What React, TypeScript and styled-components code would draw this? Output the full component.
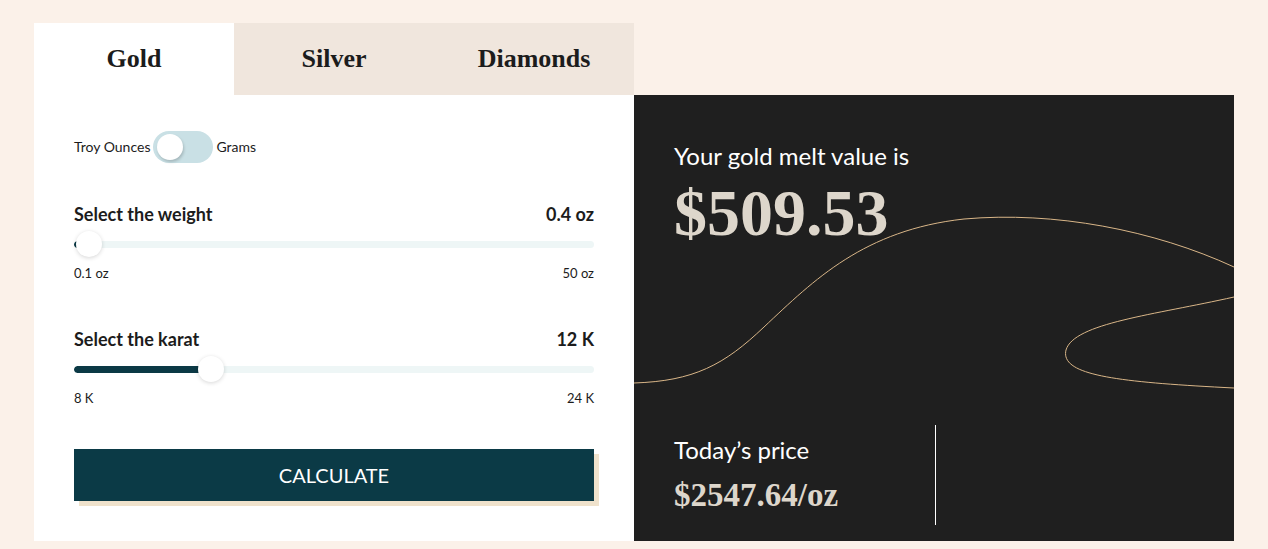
import React from "react";
import styled, { createGlobalStyle } from "styled-components";

const GlobalStyle = createGlobalStyle`
  body {
    margin: 0;
    background: #fbf1e9;
    font-family: Lato, "Open Sans", sans-serif;
    color: #1c1c1c;
  }
`;

const Page = styled.div`
  display: flex;
  justify-content: center;
  padding: 23px 0 8px;
`;

const Calculator = styled.div`
  width: 1200px;
  display: grid;
  grid-template-columns: 600px 600px;
  grid-template-rows: 72px 446px;
`;

const Tabs = styled.div`
  grid-column: 1;
  grid-row: 1;
  display: flex;
  background: #f0e6dd;
`;

const Tab = styled.button<{ active?: boolean }>`
  flex: 1;
  border: 0;
  padding: 0;
  display: flex;
  align-items: center;
  justify-content: center;
  background: ${({ active }) => (active ? "#ffffff" : "transparent")};
  font-family: "Liberation Serif", "DejaVu Serif", serif;
  font-weight: 700;
  font-size: 26px;
  color: #1c1c1c;
  cursor: pointer;
`;

const FormPanel = styled.div`
  grid-column: 1;
  grid-row: 2;
  background: #ffffff;
  padding: 36px 40px 0;
  display: flex;
  flex-direction: column;
`;

const ToggleRow = styled.div`
  display: flex;
  align-items: center;
  gap: 3px;
  height: 32px;
  line-height: 30px;
  font-size: 14px;
`;

const Switch = styled.div`
  width: 60px;
  height: 32px;
  border-radius: 16px;
  background: #c9e0e5;
  display: flex;
  align-items: center;
  padding: 0 4px;
  box-sizing: border-box;
`;

const Knob = styled.div`
  width: 26px;
  height: 26px;
  border-radius: 50%;
  background: #ffffff;
  box-shadow: 1px 2px 3px rgba(0, 0, 0, 0.18);
`;

const Field = styled.div<{ gap: number }>`
  margin-top: ${({ gap }) => gap}px;
  display: flex;
  flex-direction: column;
`;

const FieldHeader = styled.div`
  display: flex;
  justify-content: space-between;
  height: 20px;
  line-height: 20px;
  font-size: 18px;
  font-weight: 700;
`;

const Track = styled.div`
  position: relative;
  margin-top: 7px;
  height: 26px;
  display: flex;
  align-items: center;
`;

const Rail = styled.div`
  width: 100%;
  height: 7px;
  border-radius: 4px;
  background: #eef6f6;
  overflow: hidden;
`;

const Fill = styled.div`
  height: 100%;
  background: #0b3945;
  border-radius: 4px;
`;

const Thumb = styled.div`
  position: absolute;
  top: 0;
  width: 26px;
  height: 26px;
  border-radius: 50%;
  background: #ffffff;
  box-shadow: 0 1px 4px rgba(0, 0, 0, 0.16);
`;

const Limits = styled.div`
  display: flex;
  justify-content: space-between;
  margin-top: 8px;
  font-size: 13px;
  line-height: 16px;
`;

const ButtonWrap = styled.div`
  margin-top: 43px;
  box-shadow: 5px 5px 0 #efe2cc;
`;

const CalcButton = styled.button`
  width: 100%;
  height: 52px;
  border: 0;
  background: #0b3a46;
  color: #ffffff;
  font-family: Lato, sans-serif;
  font-size: 20px;
  cursor: pointer;
`;

const ResultPanel = styled.div`
  grid-column: 2;
  grid-row: 2;
  position: relative;
  background: #1f1f1f;
  display: flex;
  flex-direction: column;
  justify-content: space-between;
  overflow: hidden;
`;

const Waves = styled.svg`
  position: absolute;
  inset: 0;
  pointer-events: none;
`;

const ResultTop = styled.div`
  position: relative;
  padding: 47px 40px 0;
`;

const Caption = styled.div`
  color: #ffffff;
  font-size: 24px;
  line-height: 28px;
`;

const BigValue = styled.div<{ size: number; gap: number }>`
  margin-top: ${({ gap }) => gap}px;
  color: #ddd6cb;
  font-family: "Liberation Serif", "DejaVu Serif", serif;
  font-weight: 700;
  font-size: ${({ size }) => size}px;
  line-height: 1.1;
`;

const ResultBottom = styled.div`
  position: relative;
  display: flex;
  padding: 0 40px;
  margin-bottom: 16px;
`;

const PriceCol = styled.div`
  width: 261px;
  height: 100px;
  border-right: 1px solid #ffffff;
  display: flex;
  flex-direction: column;
  justify-content: center;
`;

type SliderProps = {
  label: string;
  value: string;
  min: string;
  max: string;
  percent: number;
  gap: number;
};

const Slider = ({ label, value, min, max, percent, gap }: SliderProps) => {
  const width = 520;
  const left = percent * (width - 26);
  return (
    <Field gap={gap}>
      <FieldHeader>
        <span>{label}</span>
        <span>{value}</span>
      </FieldHeader>
      <Track>
        <Rail>
          <Fill style={{ width: left + 13 }} />
        </Rail>
        <Thumb style={{ left }} />
      </Track>
      <Limits>
        <span>{min}</span>
        <span>{max}</span>
      </Limits>
    </Field>
  );
};

export default function App() {
  return (
    <Page>
      <GlobalStyle />
      <Calculator>
        <Tabs>
          <Tab active>Gold</Tab>
          <Tab>Silver</Tab>
          <Tab>Diamonds</Tab>
        </Tabs>
        <FormPanel>
          <ToggleRow>
            <span>Troy Ounces</span>
            <Switch>
              <Knob />
            </Switch>
            <span>Grams</span>
          </ToggleRow>
          <Slider
            gap={41}
            label="Select the weight"
            value="0.4 oz"
            min="0.1 oz"
            max="50 oz"
            percent={0.004}
          />
          <Slider
            gap={48}
            label="Select the karat"
            value="12 K"
            min="8 K"
            max="24 K"
            percent={0.25}
          />
          <ButtonWrap>
            <CalcButton>CALCULATE</CalcButton>
          </ButtonWrap>
        </FormPanel>
        <ResultPanel>
          <Waves width="600" height="446" viewBox="0 0 600 446">
            <path
              d="M0 288 C60 286 90 270 130 232 C180 185 230 135 330 124 C420 116 520 135 600 172"
              fill="none"
              stroke="#d9b688"
              strokeWidth="1"
            />
            <path
              d="M600 202 C520 220 440 228 432 255 C426 280 480 287 600 293"
              fill="none"
              stroke="#d9b688"
              strokeWidth="1"
            />
          </Waves>
          <ResultTop>
            <Caption>Your gold melt value is</Caption>
            <BigValue size={66} gap={7}>$509.53</BigValue>
          </ResultTop>
          <ResultBottom>
            <PriceCol>
              <Caption>Today’s price</Caption>
              <BigValue size={33} gap={13}>$2547.64/oz</BigValue>
            </PriceCol>
          </ResultBottom>
        </ResultPanel>
      </Calculator>
    </Page>
  );
}
